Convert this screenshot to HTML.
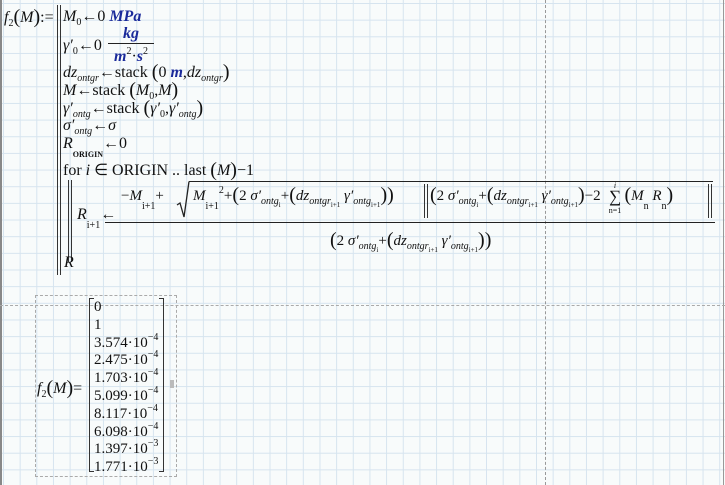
<!DOCTYPE html>
<html><head><meta charset="utf-8">
<style>
html,body{margin:0;padding:0}
body{width:725px;height:485px;overflow:hidden;position:relative;background-color:#f8fbfb;
background-image:linear-gradient(to right,#d6e4ef 1px,transparent 1px),linear-gradient(to bottom,#d6e4ef 1px,transparent 1px);
background-size:16.667px 16.667px;background-position:3px 3px;
font-family:"Liberation Serif",serif;font-size:16px;color:#111}
.a{position:absolute;white-space:nowrap;line-height:16px;height:16px}
i{font-style:italic}
sub,sup{font-size:10px;vertical-align:baseline;position:relative;line-height:0}
sub{top:4px}
sup{top:-7px}
sub.d{top:9px}
.u{color:#1a2a9a;font-weight:bold;font-style:italic}
.vl{position:absolute;width:1px;background:#333}
.p{font-size:20px;position:relative;top:1px;line-height:0}
.n{font-size:15px}
</style></head><body>
<div style="position:absolute;left:0;top:0;width:2px;height:485px;background:#888"></div>
<div style="position:absolute;left:723px;top:0;width:1px;height:485px;background:#999"></div>
<div style="position:absolute;left:545px;top:0;width:0;height:485px;border-left:1px dashed #999"></div>
<div style="position:absolute;left:0;top:305px;width:725px;height:0;border-top:1px dashed #aaa"></div>

<div class="a" style="left:4px;top:10px"><i>f</i><sub>2</sub><span class="p">(</span><i>M</i><span class="p">)</span>:=</div>
<div class="vl" style="left:57px;top:5px;height:270px"></div>
<div class="vl" style="left:60px;top:5px;height:270px"></div>

<div class="a" style="left:63px;top:9px"><i>M</i><sub>0</sub>←0 <span class="u">MPa</span></div>
<div class="a" style="left:63px;top:38px"><i>γ′</i><sub>0</sub>←0</div>
<div class="a" style="left:108px;top:26px;width:46px;text-align:center"><span class="u">kg</span></div>
<div style="position:absolute;left:108px;top:43px;width:46px;height:1px;background:#222"></div>
<div class="a" style="left:108px;top:49px;width:46px;text-align:center"><span class="u">m</span><sup>2</sup>·<span class="u">s</span><sup>2</sup></div>
<div class="a" style="left:63px;top:65px"><i>dz</i><sub><i>ontgr</i></sub>←stack <span class="p">(</span>0 <span class="u">m</span>,<i>dz</i><sub><i>ontgr</i></sub><span class="p">)</span></div>
<div class="a" style="left:63px;top:83px"><i>M</i>←stack <span class="p">(</span><i>M</i><sub>0</sub>,<i>M</i><span class="p">)</span></div>
<div class="a" style="left:63px;top:101px"><i>γ′</i><sub><i>ontg</i></sub>←stack <span class="p">(</span><i>γ′</i><sub>0</sub>,<i>γ′</i><sub><i>ontg</i></sub><span class="p">)</span></div>
<div class="a" style="left:63px;top:118px"><i>σ′</i><sub><i>ontg</i></sub>←<i>σ</i></div>
<div class="a" style="left:63px;top:136px"><i>R</i><sub class="d" style="font-size:8px;font-weight:bold">ORIGIN</sub>←0</div>
<div class="a" style="left:63px;top:163px">for <i>i</i> ∈ ORIGIN .. last <span class="p">(</span><i>M</i><span class="p">)</span>−1</div>

<div class="vl" style="left:68px;top:180px;height:82px"></div>
<div class="vl" style="left:71px;top:180px;height:82px"></div>
<div class="a" style="left:77px;top:207px"><i>R</i><sub class="d">i+1</sub>←</div>
<div class="a" style="left:64px;top:255px"><i>R</i></div>

<div class="a n" style="left:121px;top:188px">−<i>M</i><sub class="d">i+1</sub>+</div>
<div style="position:absolute;left:189px;top:181px;width:524px;height:1px;background:#222"></div>
<svg style="position:absolute;left:176px;top:181px" width="14" height="38"><path d="M1 24 L4 22 L8 36 L13 0.5" fill="none" stroke="#222" stroke-width="1.3"/></svg>
<div class="a n" style="left:193px;top:188px"><i>M</i><sub class="d">i+1</sub><sup>2</sup>+<span class="p">(</span>2 <i>σ′</i><sub><i>ontg</i><sub style="font-size:7px;top:3px">i</sub></sub>+<span class="p">(</span><i>dz</i><sub><i>ontgr</i><sub style="font-size:7px;top:3px">i+1</sub></sub> <i>γ′</i><sub><i>ontg</i><sub style="font-size:7px;top:3px">i+1</sub></sub><span class="p">))</span></div>
<div class="vl" style="left:424px;top:184px;height:34px"></div>
<div class="vl" style="left:427px;top:184px;height:34px"></div>
<div class="a n" style="left:430px;top:188px"><span class="p">(</span>2 <i>σ′</i><sub><i>ontg</i><sub style="font-size:7px;top:3px">i</sub></sub>+<span class="p">(</span><i>dz</i><sub><i>ontgr</i><sub style="font-size:7px;top:3px">i+1</sub></sub> <i>γ′</i><sub><i>ontg</i><sub style="font-size:7px;top:3px">i+1</sub></sub><span class="p">)</span>−2 <span style="display:inline-block;width:20px"></span><span class="p">(</span><i>M</i><sub class="d">n</sub> <i>R</i><sub class="d">n</sub><span class="p">)</span></div>
<div class="a" style="left:606px;top:182px;font-size:8px;line-height:8px;width:18px;text-align:center"><i>i</i></div>
<div class="a" style="left:606px;top:189px;font-size:17px;width:18px;text-align:center">∑</div>
<div class="a" style="left:606px;top:207px;font-size:8px;line-height:8px;width:18px;text-align:center">n=1</div>
<div class="vl" style="left:708px;top:184px;height:34px"></div>
<div class="vl" style="left:711px;top:184px;height:34px"></div>
<div style="position:absolute;left:105px;top:222px;width:610px;height:1px;background:#222"></div>
<div class="a n" style="left:330px;top:233px"><span class="p">(</span>2 <i>σ′</i><sub><i>ontg</i><sub style="font-size:7px;top:3px">i</sub></sub>+<span class="p">(</span><i>dz</i><sub><i>ontgr</i><sub style="font-size:7px;top:3px">i+1</sub></sub> <i>γ′</i><sub><i>ontg</i><sub style="font-size:7px;top:3px">i+1</sub></sub><span class="p">))</span></div>

<div style="position:absolute;left:35px;top:295px;width:140px;height:180px;border:1px dashed #aaa"></div>
<div class="a" style="left:37px;top:381px"><i>f</i><sub>2</sub><span class="p">(</span><i>M</i><span class="p">)</span>=</div>
<div style="position:absolute;left:89px;top:298px;width:4px;height:172px;border:1px solid #333;border-right:none"></div>
<div style="position:absolute;left:159px;top:298px;width:4px;height:172px;border:1px solid #333;border-left:none"></div>
<div class="a n" style="left:94px;top:299px">0</div>
<div class="a n" style="left:94px;top:317px">1</div>
<div class="a n" style="left:94px;top:335px">3.574·10<sup>−4</sup></div>
<div class="a n" style="left:94px;top:352px">2.475·10<sup>−4</sup></div>
<div class="a n" style="left:94px;top:370px">1.703·10<sup>−4</sup></div>
<div class="a n" style="left:94px;top:388px">5.099·10<sup>−4</sup></div>
<div class="a n" style="left:94px;top:406px">8.117·10<sup>−4</sup></div>
<div class="a n" style="left:94px;top:424px">6.098·10<sup>−4</sup></div>
<div class="a n" style="left:94px;top:441px">1.397·10<sup>−3</sup></div>
<div class="a n" style="left:94px;top:459px">1.771·10<sup>−3</sup></div>
<div style="position:absolute;left:170px;top:380px;width:4px;height:8px;background:#bbb"></div>
</body></html>
